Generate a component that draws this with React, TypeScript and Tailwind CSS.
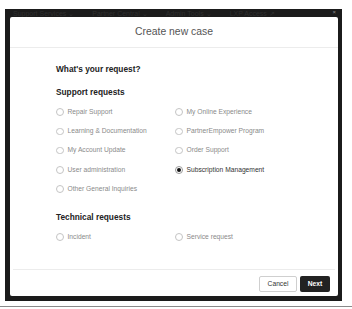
import React from "react";

const support: [string, boolean][] = [
  ["Repair Support", false],
  ["My Online Experience", false],
  ["Learning & Documentation", false],
  ["PartnerEmpower Program", false],
  ["My Account Update", false],
  ["Order Support", false],
  ["User administration", false],
  ["Subscription Management", true],
  ["Other General Inquiries", false],
];

const technical: [string, boolean][] = [
  ["Incident", false],
  ["Service request", false],
];

function Radio({ label, checked }: { label: string; checked: boolean }) {
  return (
    <label className="flex h-[19.25px] items-center gap-[4px]">
      <span
        className={`flex h-[7.5px] w-[7.5px] items-center justify-center rounded-full border ${
          checked ? "border-[#9a9a9a]" : "border-[#c4c4c4]"
        } bg-white`}
      >
        {checked && <span className="h-[3.5px] w-[3.5px] rounded-full bg-[#111]" />}
      </span>
      <span className={`text-[6.7px] leading-none ${checked ? "text-[#333] font-medium" : "text-[#8a8a8a]"}`}>
        {label}
      </span>
    </label>
  );
}

export default function App() {
  return (
    <div className="h-[309px] w-[352px] bg-white font-['Liberation_Sans',Arial,sans-serif]">
      <div className="h-[9px]" />
      {/* dark page behind the dialog */}
      <div className="relative ml-[5px] h-[292px] w-[337px] overflow-hidden bg-[#1b1b1b] pt-[8px] pl-[5px]">
        <div className="absolute left-[8px] top-[1px] flex gap-[18px] text-[7px] leading-none text-[#2e2e2e]">
          <span>Support Services ⌄</span>
          <span>Partner Central ⌄</span>
          <span>Admin Tools ⌄</span>
          <span>LXP Access ↗</span>
        </div>
        <span className="absolute right-[6px] top-0 text-[6px] leading-none text-[#8a8a8a]">×</span>

        <div className="relative flex h-[279px] w-[328px] flex-col rounded-[2px] bg-white">
          {/* Header */}
          <div className="flex h-[31px] items-center justify-center border-b border-[#ececec]">
            <h1 className="text-[10.4px] text-[#555]">Create new case</h1>
          </div>

          {/* Body */}
          <div className="flex-1 pl-[46px] pt-[16px]">
            <p className="text-[8.3px] font-bold leading-[10px] text-[#222]">What's your request?</p>

            <h2 className="mt-[13px] text-[8.3px] font-bold leading-[10px] text-[#222]">Support requests</h2>
            <div className="mt-[5.5px] grid grid-cols-[119px_1fr]">
              {support.map(([label, checked]) => (
                <Radio key={label} label={label} checked={checked} />
              ))}
            </div>

            <h2 className="mt-[13px] text-[8.3px] font-bold leading-[10px] text-[#222]">Technical requests</h2>
            <div className="mt-[5.5px] grid grid-cols-[119px_1fr]">
              {technical.map(([label, checked]) => (
                <Radio key={label} label={label} checked={checked} />
              ))}
            </div>
          </div>

          {/* Footer */}
          <div className="mx-[3px] flex justify-end gap-[3px] border-t border-[#ececec] pb-[4px] pr-[5px] pt-[6px]">
            <button className="h-[16px] w-[38px] rounded-[2px] border border-[#cfcfcf] bg-white text-[6.7px] text-[#333]">
              Cancel
            </button>
            <button className="h-[16px] w-[30px] rounded-[2px] bg-[#222] text-[6.7px] font-bold text-white">
              Next
            </button>
          </div>
        </div>
      </div>
      <div className="mt-[5px] h-px w-full bg-[#8a8a8a]" />
    </div>
  );
}
